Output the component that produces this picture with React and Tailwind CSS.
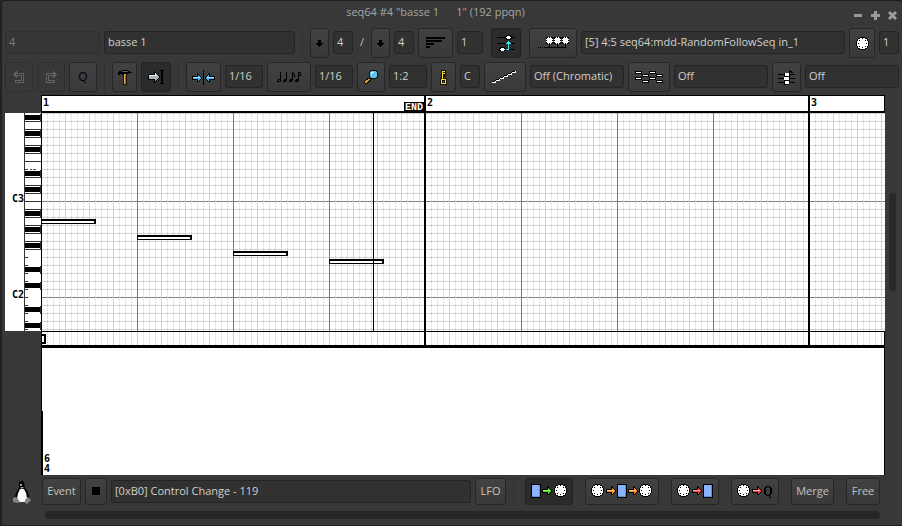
import React from "react";

const FONT = "font-['Open_Sans',sans-serif]";

function Btn({ label, pressed, disabled, className = "", children }) {
  return (
    <button
      type="button"
      aria-label={label}
      aria-pressed={pressed ? true : undefined}
      disabled={disabled}
      className={`flex shrink-0 items-center justify-center rounded-[3px] border ${
        pressed
          ? "border-[#222222] bg-[#2b2b2b]"
          : disabled
            ? "border-[#2f2f2f] bg-[#383838]"
            : "border-[#262626] bg-linear-to-b from-[#424242] to-[#393939]"
      } ${className}`}
    >
      {children}
    </button>
  );
}

function Entry({ label, value, disabled, className = "" }) {
  return (
    <input
      aria-label={label}
      defaultValue={value}
      disabled={disabled}
      className={`mb-px h-[23px] min-w-0 rounded-[3px] border px-[3px] pb-[2px] text-[11px] outline-none ${
        disabled
          ? "border-[#2f2f2f] bg-[#363636] text-[#7c7c7c]"
          : "border-[#242424] bg-[#313131] text-[#d0d0cc]"
      } ${className}`}
    />
  );
}

function Sep({ className = "" }) {
  return <div className={`h-[30px] w-px shrink-0 bg-[#2f2f2f] ${className}`} />;
}

function Svg({ w, h, children }) {
  return (
    <svg width={w} height={h} viewBox={`0 0 ${w} ${h}`} shapeRendering="crispEdges" aria-hidden="true" className="shrink-0">
      {children}
    </svg>
  );
}

/* ---------- small shapes shared by several icons ---------- */

function Arrow({ x = 0, y = 0, fill, light }) {
  return (
    <g transform={`translate(${x} ${y})`}>
      <path d="M0 3h5V0h1v1h1v1h1v1h1v1h1v2h-1v1h-1v1h-1v1H5V7H0z" fill="#000" />
      <path d="M1 4h5V2h1v1h1v1h1v2H8v1H7v1H6V6H1z" fill={fill} />
      <path d="M1 4h7v1H1z" fill={light} />
    </g>
  );
}

function Din({ x = 0, y = 0 }) {
  return (
    <g transform={`translate(${x} ${y})`}>
      <path d="M4 0h5v1h2v1h1v2h1v5h-1v2h-1v1H9v1H4v-1H2v-1H1V9H0V4h1V2h1V1h2z" fill="#000" />
      <path d="M4 1h5v1h2v2h1v5h-1v2H9v1H4v-1H2V9H1V4h1V2h2z" fill="#fff" />
      <path d="M6 1h1v1H6zM2 6h1v1H2zM10 6h1v1h-1zM3 9h1v1H3zM9 9h1v1H9zM6 10h1v1H6zM3 3h1v1H3zM9 3h1v1H9z" fill="#000" />
    </g>
  );
}

function Block({ x = 0, y = 0 }) {
  return (
    <g transform={`translate(${x} ${y})`}>
      <rect width="10" height="14" fill="#000" />
      <rect x="1" y="1" width="8" height="12" fill="#5b8fe8" />
      <rect x="1" y="1" width="7" height="11" fill="#8ab4ff" />
    </g>
  );
}

/* ---------- icons ---------- */

const UndoIcon = ({ flip }) => (
  <svg width="12" height="13" viewBox="0 0 12 13" shapeRendering="crispEdges" aria-hidden="true" className={flip ? "-scale-x-100" : ""}>
    <path d="M3 0h1v2h7v10H2V9h6V5H4v2H3V6H2V5H1V4H0V3h1V2h1V1h1z" fill="#646464" />
    <path d="M3 3h7v8H3v-1h6V4H3z" fill="#343434" />
  </svg>
);

const DownIcon = () => (
  <Svg w={7} h={7}>
    <path d="M2 0h3v3h2v1H6v1H5v1H4v1H3V6H2V5H1V4H0V3h2z" fill="#000" />
  </Svg>
);

const LengthIcon = () => (
  <Svg w={20} h={12}>
    <path d="M0 0h19v2H0zM0 3h16v2H0zM0 6h8v2H0zM0 9h4v2H0z" fill="#000" />
  </Svg>
);

const TransposeIcon = () => (
  <Svg w={18} h={16}>
    <path d="M0 2h18v1H0zM0 8h18v1H0zM0 14h18v1H0z" fill="#000" />
    <path d="M8 1h1V0h5v1h1v3h-1v1H9V4H8zM2 13h1v-1h5v1h1v3H2z" fill="#000" />
    <path d="M10 1h3v1h1v1h-1v1h-3V3H9V2h1zM4 13h3v1h1v1H7v1H4v-1H3v-1h1z" fill="#fff" />
    <path d="M9 9V8h1V7h1V6h1v1h1v1h1v1h-2v6H9v-1h2V9z" fill="#45e6e6" />
  </Svg>
);

const BusIcon = () => (
  <Svg w={31} h={13}>
    {[8, 16, 24].map((x) => (
      <g key={x} transform={`translate(${x} 0)`}>
        <path d="M0 0h7v7H0z" fill="#000" />
        <path d="M1 1h1v-1h1v1h1v-1h1v1h1v1h1v1H6v1h1v1H6v1H5v1H4V6H3v1H2V6H1V5H0V4h1V3H0V2h1z" fill="#fff" />
        <path d="M3 7h1v4H3z" fill="#000" />
      </g>
    ))}
    <path d="M0 10h1v1H0zM2 10h1v1H2zM4 10h1v1H4zM6 10h22v1H6z" fill="#000" />
  </Svg>
);

const DinIcon = () => (
  <Svg w={13} h={13}>
    <Din />
  </Svg>
);

const HammerIcon = () => (
  <Svg w={14} h={15}>
    <path d="M1 2V1h3V0h6v1h2v1h2v1h-3v1H9v1H4V4H2v1H0V2z" fill="#000" />
    <path d="M4 1h6v1H4z" fill="#59636d" />
    <path d="M5 5h4v10H5z" fill="#161616" />
    <path d="M6 4h2v10H6z" fill="#e2a24b" />
    <path d="M7 5h1v9H7z" fill="#a86d20" />
  </Svg>
);

const EndSnapIcon = () => (
  <Svg w={17} h={16}>
    <path d="M0 5h6V2h1v1h1v1h1v1h1v1h1v1h1v2h-1v1h-1v1H9v1H8v1H7v1H6v-3H0z" fill="#000" />
    <path d="M1 6h6V4h1v1h1v1h1v1h1v2h-1v1H9v1H8v1H7v-2H1z" fill="#a8b0ba" />
    <path d="M1 6h8v1H1zM7 4h1v2H7z" fill="#e8edf2" />
    <path d="M12 1h4v1h-1v12h1v1h-4v-1h1V2h-1z" fill="#000" />
  </Svg>
);

const SnapIcon = () => (
  <Svg w={25} h={15}>
    <Arrow x={1} y={3} fill="#46aef2" light="#a8e2ff" />
    <path d="M12 0h1v15h-1z" fill="#000" />
    <g transform="translate(24 0) scale(-1 1)">
      <Arrow x={0} y={3} fill="#46aef2" light="#a8e2ff" />
    </g>
  </Svg>
);

const NotesIcon = () => (
  <Svg w={25} h={12}>
    <path d="M3 1h1v10H3zM1 8h2v1H1zM0 9h1v2H0zM1 11h2v-1H1z" fill="#000" />
    <path d="M9 1h1v9H9zM7 8h2v3H7zM6 9h1v2H6z" fill="#000" />
    <path d="M15 1h1v9h-1zM13 8h2v3h-2zM12 9h1v2h-1zM16 2h1v1h-1zM17 3h1v3h-1z" fill="#000" />
    <path d="M21 1h1v9h-1zM19 8h2v3h-2zM18 9h1v2h-1zM22 1h2v1h-2zM23 2h1v3h-1zM22 4h1v1h-1z" fill="#000" />
  </Svg>
);

const ZoomIcon = () => (
  <Svg w={15} h={15}>
    <path d="M7 0h5v1h1v1h1v5h-1v1h-1v1H8v1H7v1H6v1H5v1H4v1H1v-1H0v-2h1v-1h1V9h1V8h3V7H5V2h1V1h1z" fill="#111" />
    <path d="M7 1h5v1h1v5h-1v1H7V7H6V2h1z" fill="#5fc2ee" />
    <path d="M7 2h3v1H8v2H7z" fill="#d5f4ff" />
    <path d="M4 9h2v1H5v1H4v1H3v1H1v-2h1v-1h2z" fill="#e59a3a" />
  </Svg>
);

const KeyIcon = () => (
  <Svg w={7} h={15}>
    <path d="M1 0h5v7H4v1h3v7H0V8h1z" fill="#171505" />
    <path d="M2 1h3v1H3v1h2v1H3v5h3v5H1V9h1z" fill="#f2d72c" />
    <path d="M2 10h3v3H2z" fill="#171505" />
    <path d="M3 11h1v1H3z" fill="#8a7a18" />
  </Svg>
);

const ScaleIcon = () => (
  <Svg w={26} h={13}>
    {[0, 1, 2, 3, 4, 5].map((i) => (
      <g key={i} transform={`translate(${i * 4} ${10 - i * 2})`}>
        <path d="M0 0h4v1H0zM3 -1h1v1H3z" fill="#000" />
        <path d="M0 1h4v1H0zM3 0h1v1H3z" fill="#fff" />
      </g>
    ))}
  </Svg>
);

const ChordIcon = () => (
  <Svg w={17} h={15}>
    <path d="M0 4h17v1H0zM0 8h17v1H0zM0 12h17v1H0z" fill="#000" />
    <path d="M11 0h1v13h-1zM12 1h2v1h-2zM13 2h2v1h-2zM6 3h5v12H6z" fill="#000" />
    <path d="M7 3h4v3H7zM6 7h5v3H6zM7 11h4v3H7z" fill="#fff" />
    <path d="M6 6h5v1H6zM6 10h5v1H6z" fill="#000" />
  </Svg>
);

const BackSeqIcon = () => (
  <Svg w={29} h={13}>
    {[[0, 0], [14, 0], [7, 3], [21, 3], [0, 6], [14, 6], [7, 9], [21, 9]].map(([x, y]) => (
      <g key={`${x}-${y}`} transform={`translate(${x} ${y})`}>
        <path d="M0 0h7v3H0z" fill="#000" />
        <path d="M1 1h5v1H1z" fill="#fff" />
      </g>
    ))}
  </Svg>
);

const PlayIcon = () => (
  <Svg w={36} h={14}>
    <Block />
    <Arrow x={11} y={2} fill="#3fd414" light="#a6ff7c" />
    <Din x={23} y={0} />
  </Svg>
);

const ThruIcon = () => (
  <Svg w={62} h={14}>
    <Din x={0} y={0} />
    <Arrow x={15} y={2} fill="#ee8a24" light="#ffc98a" />
    <Block x={26} />
    <Arrow x={37} y={2} fill="#ee8a24" light="#ffc98a" />
    <Din x={48} y={0} />
  </Svg>
);

const RecIcon = () => (
  <Svg w={36} h={14}>
    <Din x={0} y={0} />
    <Arrow x={15} y={2} fill="#ea3d3d" light="#ffb3b3" />
    <Block x={26} />
  </Svg>
);

const QRecIcon = () => (
  <Svg w={36} h={14}>
    <Din x={0} y={0} />
    <Arrow x={15} y={2} fill="#ea3d3d" light="#ffb3b3" />
    <path d="M29 2h4v1h1v1h1v6h-1v1h-1v2h1v1h-2v-2h-3v-1h-1v-1h-1V4h1V3h1zM29 4v6h1v1h2v-1h1V4h-1V3h-2v1z" fill="#000" />
  </Svg>
);

const TuxIcon = () => (
  <svg width="18" height="23" viewBox="0 0 18 23" aria-hidden="true">
    <path d="M6 1Q9-1 11 1l1 6q4 4 4 9l-2 4H4l-2-4q0-4 4-9z" fill="#050505" />
    <path d="M7 8h4q3 4 3 9l-2 4H6l-2-4q1-6 3-9z" fill="#fafafa" />
    <path d="M7 3h2v2H7zM7 6h4l-2 2z" fill="#9a9a9a" />
    <path d="M0 17l3-1 4 5-2 1-5-1zM18 19l-3-3-3 3v3l2 1z" fill="#858585" />
  </svg>
);

/* ---------- piano roll ---------- */

const MONO = "'DejaVu Sans Mono', monospace";
const BLACK_KEYS = [2, 18, 34, 58, 74, 98, 114, 130, 154, 170, 194, 210];
const FULL_LINES = [8, 16, 24, 32, 40, 48, 64, 72, 80, 88, 96, 104, 112, 120, 128, 136];
const SHORT_LINES = [144, 152, 160, 168, 176, 184, 192, 200, 208, 216];
const NOTES = [
  [0, 106],
  [96, 122],
  [192, 138],
  [288, 146],
];

function Keys() {
  return (
    <svg width="36" height="218" shapeRendering="crispEdges" role="img" aria-label="Piano keys">
      <rect width="36" height="218" fill="#fff" />
      <rect x="19" width="1" height="218" fill="#333" />
      {FULL_LINES.map((y) => (
        <rect key={y} x="20" y={y} width="16" height="1" fill="#333" />
      ))}
      {SHORT_LINES.map((y) => (
        <rect key={y} x="20" y={y} width="3" height="1" fill="#333" />
      ))}
      <path d="M20 56.500h12" stroke="#444" strokeDasharray="3 2 2 1" />
      {BLACK_KEYS.map((y) => (
        <g key={y}>
          <rect x="20" y={y} width="16" height="5" fill="#000" />
          <rect x="35" y={y - 1} width="1" height="8" fill="#333" />
        </g>
      ))}
      <text x="7" y="89" fontFamily={MONO} fontSize="10" fontWeight="700">C3</text>
      <text x="7" y="185" fontFamily={MONO} fontSize="10" fontWeight="700">C2</text>
    </svg>
  );
}

function GridDefs({ id, rows }) {
  return (
    <defs>
      <pattern id={`${id}-dot`} width="24" height="2" patternUnits="userSpaceOnUse">
        <path d="M6 1h1v1H6zM12 1h1v1h-1zM18 1h1v1h-1z" fill="#d0d0d0" />
      </pattern>
      <pattern id={`${id}-cell`} width="24" height="8" patternUnits="userSpaceOnUse">
        <rect width="1" height="8" fill="#d3d3d3" />
        {rows && <rect width="24" height="1" fill="#d3d3d3" />}
      </pattern>
      <pattern id={`${id}-beat`} width="96" height="8" patternUnits="userSpaceOnUse">
        <rect width="1" height="8" fill="#7c7c7c" />
      </pattern>
      <pattern id={`${id}-bar`} x="-1" width="384" height="8" patternUnits="userSpaceOnUse">
        <rect width="2" height="8" fill="#000" />
      </pattern>
    </defs>
  );
}

function Roll() {
  return (
    <svg className="block h-[218px] w-full bg-white" shapeRendering="crispEdges" role="img" aria-label="Piano roll">
      <GridDefs id="roll" rows />
      <rect width="100%" height="100%" fill="url(#roll-dot)" />
      <rect width="100%" height="100%" fill="url(#roll-cell)" />
      {[88, 184].map((y) => (
        <g key={y}>
          <rect y={y} width="100%" height="1" fill="#d3d3d3" />
          <line x1="1" x2="100%" y1={y + 0.5} y2={y + 0.5} stroke="#7c7c7c" strokeDasharray="5 1" />
        </g>
      ))}
      <rect width="100%" height="100%" fill="url(#roll-beat)" />
      <rect width="100%" height="100%" fill="url(#roll-bar)" />
      {NOTES.map(([x, y]) => (
        <g key={x}>
          <rect x={x} y={y} width="55" height="5" fill="#000" />
          <rect x={x + 1} y={y + 2} width="52" height="2" fill="#fff" />
        </g>
      ))}
      <rect x="332" width="1" height="218" fill="#000" />
    </svg>
  );
}

function TimeBar() {
  return (
    <svg className="block h-[18px] w-full border-r border-black bg-white" shapeRendering="crispEdges" role="img" aria-label="Measures">
      <GridDefs id="time" />
      <rect width="100%" height="18" fill="url(#time-bar)" />
      <rect width="100%" height="1" fill="#000" />
      <rect y="16" width="100%" height="2" fill="#000" />
      <g fontFamily={MONO} fontSize="10" fontWeight="700">
        <text x="2" y="11">1</text>
        <text x="386" y="11">2</text>
        <text x="770" y="11">3</text>
      </g>
      <rect x="363" y="7" width="20" height="10" fill="#000" />
      <text x="364" y="15" fill="#fff" fontFamily="'Liberation Mono', monospace" fontSize="10" fontWeight="700">END</text>
    </svg>
  );
}

function EventStrip() {
  return (
    <svg className="block h-[17px] w-full border-r border-black bg-white" shapeRendering="crispEdges" role="img" aria-label="Events">
      <GridDefs id="ev" />
      <rect width="100%" height="17" fill="url(#ev-dot)" />
      <rect width="100%" height="17" fill="url(#ev-cell)" />
      <rect width="100%" height="17" fill="url(#ev-bar)" />
      <rect width="100%" height="1" fill="#000" />
      <rect y="14" width="100%" height="3" fill="#000" />
      <rect y="3" width="5" height="10" fill="#000" />
      <rect y="5" width="3" height="6" fill="#fff" />
      <rect width="1" height="17" fill="#000" />
    </svg>
  );
}

function DataPane() {
  return (
    <svg className="block h-[127px] w-full border-r border-black bg-white" shapeRendering="crispEdges" role="img" aria-label="Event data">
      <rect width="1" height="127" fill="#000" />
      <rect x="1" y="63" width="1" height="64" fill="#000" />
      <g fontFamily={MONO} fontSize="10" fontWeight="700">
        <text x="3" y="114">6</text>
        <text x="3" y="124">4</text>
      </g>
    </svg>
  );
}

function TitleBar() {
  return (
    <header className="grid h-[27px] grid-cols-[1fr_auto_1fr] items-center pr-[5px]">
      <span />
      <h1 className="whitespace-pre pr-[28px] pb-1 text-[11px] font-medium text-[#a6a6a6]">{'seq64 #4 "basse 1      1" (192 ppqn)'}</h1>
      <div className="flex justify-end gap-[8px] pt-px">
        <button type="button" aria-label="Minimize">
          <Svg w={9} h={9}><path d="M0 3h8v3H0z" fill="#9a9a9a" /></Svg>
        </button>
        <button type="button" aria-label="Maximize">
          <Svg w={9} h={9}><path d="M3 0h3v3h3v3H6v3H3V6H0V3h3z" fill="#9a9a9a" /></Svg>
        </button>
        <button type="button" aria-label="Close">
          <svg width="9" height="9" viewBox="0 0 9 9" aria-hidden="true"><path d="M1 1l7 7M8 1L1 8" stroke="#9a9a9a" strokeWidth="3" /></svg>
        </button>
      </div>
    </header>
  );
}

const BOTTOM_BTN = "mb-px h-[27px] pb-px text-[11px] text-[#c2c2be]";

export default function App() {
  return (
    <div className="bg-[#242424] pl-px">
      <div className={`${FONT} rounded-t-[4px] border border-r-0 border-[#1f1f1f] bg-[#383838] text-[11px]`}>
        <TitleBar />

        <div className="flex flex-col gap-1 px-[3px]">
          <div className="flex items-center gap-1">
            <Entry label="Sequence number" value="4" disabled className="w-[95px]" />
            <Entry label="Sequence name" value="basse 1" className="w-[191px]" />
            <Sep className="mx-[3px]" />
            <Btn label="Beats per bar menu" className="h-[30px] w-[19px]"><DownIcon /></Btn>
            <Entry label="Beats per bar" value="4" className="w-5" />
            <span className="w-[10px] pb-[2px] text-center text-[#c2c2be]">/</span>
            <Btn label="Beat width menu" className="h-[30px] w-[19px]"><DownIcon /></Btn>
            <Entry label="Beat width" value="4" className="w-5" />
            <Btn label="Length" className="h-[30px] w-[35px]"><LengthIcon /></Btn>
            <Entry label="Length in bars" value="1" className="w-[26px]" />
            <Btn label="Transposable" pressed className="mx-1 h-[30px] w-[30px]"><TransposeIcon /></Btn>
            <Btn label="MIDI bus" className="h-[30px] w-12"><BusIcon /></Btn>
            <Entry label="Output port" value="[5] 4:5 seq64:mdd-RandomFollowSeq in_1" className="flex-1" />
            <Btn label="MIDI channel menu" className="h-[30px] w-[26px]"><DinIcon /></Btn>
            <Entry label="MIDI channel" value="1" className="w-5" />
          </div>

          <div className="flex items-center gap-1">
            <Btn label="Undo" disabled className="h-[30px] w-7"><UndoIcon /></Btn>
            <Btn label="Redo" disabled className="h-[30px] w-7"><UndoIcon flip /></Btn>
            <Btn label="Quantize" className="h-[30px] w-7 text-[12px] text-black">Q</Btn>
            <Sep className="mx-[3px]" />
            <Btn label="Tools" className="h-[30px] w-[25px]"><HammerIcon /></Btn>
            <Btn label="Follow progress" pressed className="h-[30px] w-[30px]"><EndSnapIcon /></Btn>
            <Sep className="mx-[3px]" />
            <Btn label="Snap" className="h-[30px] w-[35px]"><SnapIcon /></Btn>
            <Entry label="Grid snap" value="1/16" className="w-[38px]" />
            <Btn label="Note length menu" className="h-[30px] w-11"><NotesIcon /></Btn>
            <Entry label="Note length" value="1/16" className="w-[38px]" />
            <Btn label="Zoom menu" className="h-[30px] w-7"><ZoomIcon /></Btn>
            <Entry label="Zoom" value="1:2" className="w-[38px]" />
            <Btn label="Key menu" className="h-[30px] w-[25px]"><KeyIcon /></Btn>
            <Entry label="Key" value="C" className="w-5" />
            <Btn label="Scale menu" className="h-[30px] w-[42px]"><ScaleIcon /></Btn>
            <Entry label="Scale" value="Off (Chromatic)" className="flex-1" />
            <Btn label="Background sequence menu" className="h-[30px] w-[42px]"><BackSeqIcon /></Btn>
            <Entry label="Background sequence" value="Off" className="flex-1" />
            <Btn label="Chord menu" className="h-[30px] w-[29px]"><ChordIcon /></Btn>
            <Entry label="Chord" value="Off" className="flex-1" />
          </div>
        </div>

        <main className="mt-[3px] flex pl-[3px]">
          <div className="w-9 shrink-0 pt-[18px]">
            <Keys />
          </div>
          <div className="min-w-0 flex-1">
            <div className="border-l border-black [&>svg]:-ml-px [&>svg]:w-[calc(100%+1px)]">
              <TimeBar />
              <Roll />
              <EventStrip />
              <DataPane />
            </div>
          </div>
          <div className="flex w-[17px] shrink-0 flex-col items-center pt-[98px]">
            <div className="mr-[2px] h-[98px] w-[7px] rounded-full bg-[#282828]" />
          </div>
        </main>

        <footer className="pr-[22px] pb-[6px] pl-[11px]">
          <div className="flex h-[34px] items-center gap-1">
            <span className="mr-[5px] w-5 pr-[2px]"><TuxIcon /></span>
            <Btn className={`${BOTTOM_BTN} w-[39px]`}>Event</Btn>
            <Btn label="Event menu" className={`${BOTTOM_BTN} w-[22px]`}><Svg w={8} h={8}><rect width="8" height="8" fill="#000" /></Svg></Btn>
            <Entry label="Event type" value="[0xB0] Control Change - 119" className="flex-1" />
            <Btn className={`${BOTTOM_BTN} w-[31px]`}>LFO</Btn>
            <Sep className="mx-[3px]" />
            <div className="ml-1 flex gap-3">
              <Btn label="Play" pressed className={`${BOTTOM_BTN} w-12`}><PlayIcon /></Btn>
              <Btn label="MIDI thru" className={`${BOTTOM_BTN} w-[74px]`}><ThruIcon /></Btn>
              <Btn label="Record" className={`${BOTTOM_BTN} w-12`}><RecIcon /></Btn>
              <Btn label="Quantized record" className={`${BOTTOM_BTN} w-12`}><QRecIcon /></Btn>
              <Btn className={`${BOTTOM_BTN} w-[43px]`}>Merge</Btn>
              <Btn className={`${BOTTOM_BTN} w-[34px]`}>Free</Btn>
            </div>
          </div>
          <div className="mt-[2px] ml-8 h-2 rounded-full bg-[#262626]" />
        </footer>
      </div>
    </div>
  );
}
